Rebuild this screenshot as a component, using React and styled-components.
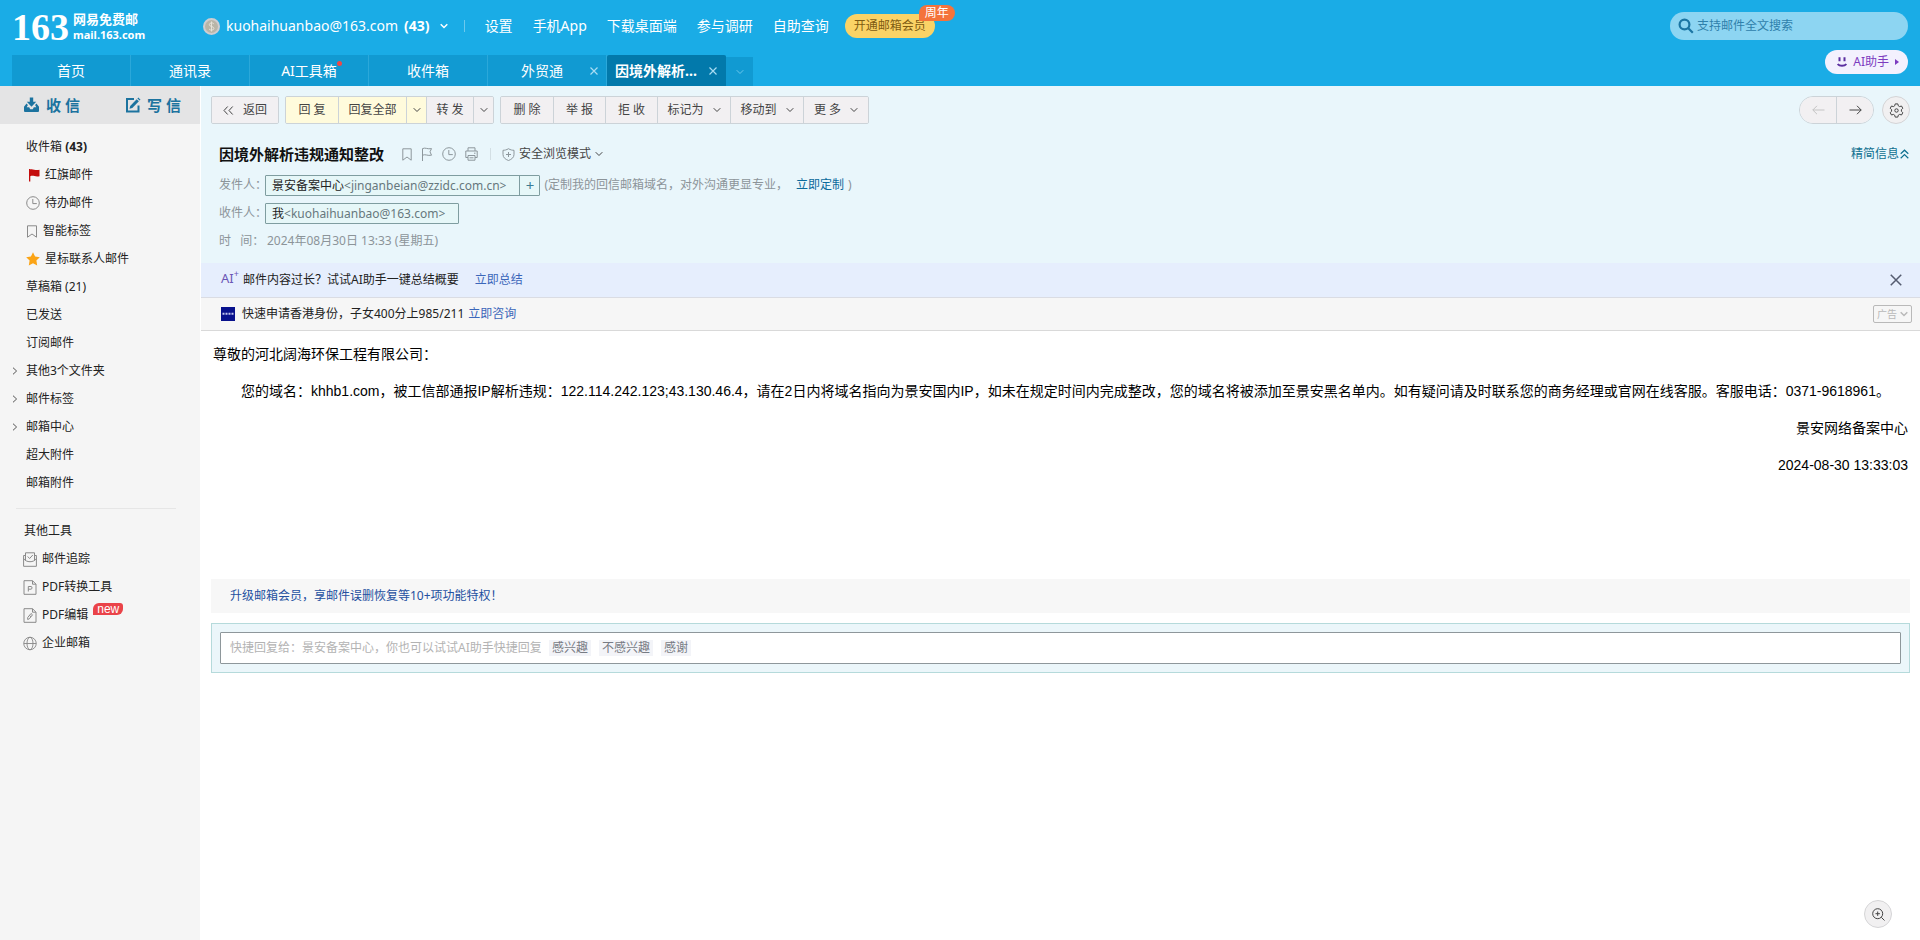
import React from 'react';
import styled, { createGlobalStyle, css } from 'styled-components';

const GlobalStyle = createGlobalStyle`
    * {
        box-sizing : border-box;
    }
    body {
        margin : 0;
        background : #fff;
        color : #222;
        font : 12px/20px "Noto Sans", "Noto Sans CJK SC", sans-serif;
    }
    button, input {
        font : inherit;
        color : inherit;
        margin : 0;
        padding : 0;
        border : 0;
        background : none;
    }
    button {
        cursor : pointer;
        white-space : nowrap;
    }
    a {
        color : inherit;
        text-decoration : none;
        white-space : nowrap;
    }
    svg {
        display : block;
        flex : none;
    }
    h1, p, ul {
        margin : 0;
        padding : 0;
        list-style : none;
    }
`

/* ---------- icons ---------- */

const Icon = ({ w = 14, h = w, box = `0 0 ${w} ${h}`, sw = 1, children }) => (
    <svg width={w} height={h} viewBox={box} fill="none" stroke="currentColor" strokeWidth={sw} aria-hidden="true">
        {children}
    </svg>
);

const ChevronDown = ({ sw = 1 }) => <Icon w={8} h={6} sw={sw}><path d="M.7 1.2 4 4.5l3.3-3.3" /></Icon>;
const ChevronRight = () => <Icon w={6} h={8}><path d="M1 .7 4.6 4 1 7.3" /></Icon>;
const Cross = ({ size = 8, sw = 1.2 }) => <Icon w={size} box="0 0 8 8" sw={sw}><path d="m.5.5 7 7m0-7-7 7" /></Icon>;
const Clock = ({ size = 14 }) => <Icon w={size} box="0 0 14 14"><circle cx="7" cy="7" r="6.3" /><path d="M6.8 3v4.6h4" /></Icon>;
const Bookmark = () => <Icon w={10} h={13}><path d="M.8.8h8.4v11.4L5 9 .8 12.200z" /></Icon>;
const Flag = () => <Icon w={12} h={14}><path d="M1.500 14V1.600c3-1.400 5 .9 9 0L9 4.800l1.500 3.400c-4 .9-6-1.400-9 0" /></Icon>;
const Printer = () => (
    <Icon w={13} h={14}>
        <path d="M3 4V.8h7V4M3 10.500H.8V4h11.400v6.500H10M3 8.500h7v4.700H3zM4.500 10.800h4M9 6.200h1.500" />
    </Icon>
);
const Shield = () => <Icon w={13} h={13}><path d="M6.500.7C8.500 2 10.500 2.300 12 2.300v4.200c0 3-2.300 4.800-5.500 6C3.300 11.300 1 9.500 1 6.500V2.300c1.500 0 3.500-.3 5.500-1.600zM6.500 4v5M4 6.500h5" /></Icon>;
const RedFlag = () => (
    <svg width="14" height="14" viewBox="0 0 14 14" fill="#c40d0d" aria-hidden="true">
        <path d="M3 1h1.300v12.500H3zM4.300 1.500C7 .4 9 3 13.500 1.800v6.400C9.500 9.500 7.500 7 4.300 8.200z" />
    </svg>
);
const Star = () => (
    <svg width="14" height="14" viewBox="0 0 14 14" fill="#fba416" aria-hidden="true">
        <path d="m7 .3 2.100 4.300 4.700.7-3.400 3.300.8 4.800L7 11.200l-4.200 2.200.8-4.800L.2 5.300l4.700-.7z" />
    </svg>
);
const Inbox = () => (
    <svg width="17" height="16" viewBox="0 0 17 16" fill="currentColor" aria-hidden="true">
        <path d="M6.800.5h3.400v4.300h3L8.500 9.800l-4.700-5h3z" />
        <path d="M3.500 6.500 1 9.800v4.200q0 1 1 1h13q1 0 1-1V9.800l-2.500-3.300-1.400 1.400 1.200 2.300h-2.500l-1 2H7.200l-1-2H3.700l1.200-2.300z" />
    </svg>
);
const Compose = () => (
    <Icon w={16} h={16} sw={2}>
        <path d="M9 2H2v12.500h11.500V8.500" />
        <path d="M4.500 11.800 5.200 9l6.500-6.800 2.200 2.100-6.600 6.800z" fill="currentColor" stroke="none" />
        <path d="m12.400 1.500.9-.9 2.200 2.100-.9.900z" fill="currentColor" stroke="none" />
    </Icon>
);
const TrackMail = () => (
    <Icon w={14} h={15}>
        <path d="M2.500 8V.8h9V8M2.500 3.500H.6v10.800h12.800V3.500h-1.900M.6 6.500C3 10.800 11 10.800 13.400 6.500M4.700 4.500l1.900 2 3.200-3.500" />
    </Icon>
);
const PdfFile = () => <Icon w={14} h={15}><path d="M1 .7h8.500L13 4.200v10.100H1zM9.500.7v3.500H13M5.300 11.500v-5H8q1 0 1 1.300T8 9.200H5.300" /></Icon>;
const PdfEdit = () => <Icon w={14} h={15}><path d="M1 .7h8.500L13 4.200v10.100H1zM9.500.7v3.500H13M4.700 11.500v-2l3.300-4 1.500 1.300-3.200 4zM6.500 7.500 8 8.800" /></Icon>;
const Globe = () => <Icon w={15}><circle cx="7.500" cy="7.500" r="6.700" /><ellipse cx="7.500" cy="7.500" rx="3.200" ry="6.700" /><path d="M.8 7.500h13.400" /></Icon>;
const Magnifier = () => <Icon w={16} sw={2.200}><circle cx="6.500" cy="6.500" r="4.900" /><path d="m10 10 4.800 4.800" /></Icon>;
const ZoomPlus = () => <Icon w={13}><circle cx="5.700" cy="5.700" r="5" /><path d="m9.300 9.300 3.200 3.200M5.700 3.500v4.400M3.500 5.700h4.400" /></Icon>;
const Gear = () => (
    <Icon w={15}>
        <path d="M6.200.9h2.600l.5 1.900 1.300.8 1.900-.6 1.300 2.300-1.400 1.300v1.700l1.400 1.400-1.300 2.300-1.900-.6-1.300.8-.5 1.900H6.200l-.5-1.900-1.300-.8-1.900.6-1.300-2.300 1.400-1.400V6.600L1.200 5.300 2.500 3l1.900.6 1.300-.8z" />
        <circle cx="7.500" cy="7.500" r="1.700" />
    </Icon>
);
const ArrowLeft = () => <Icon w={13} h={10}><path d="M12.500 5H.8M5 .8.800 5 5 9.200" /></Icon>;
const ArrowRight = () => <Icon w={13} h={10}><path d="M.5 5h11.700M8 .8 12.200 5 8 9.200" /></Icon>;
const DoubleLeft = () => <Icon w={11} h={9}><path d="M4.700.5 1 4.500l3.700 4M9.700.5 6 4.500l3.700 4" /></Icon>;
const DoubleUp = () => <Icon w={9} h={10} sw={1.200}><path d="m.7 4.800 3.800-3.600 3.800 3.600M.7 9.200l3.800-3.600 3.800 3.600" /></Icon>;
const Smile = () => (
    <Icon w={10} sw={2}>
        <path d="M2.500.3v4M7.500.3v4M.6 7c1.800 2.400 7 2.400 8.800 0" />
    </Icon>
);
const Avatar = () => (
    <svg width="17" height="17" viewBox="0 0 17 17" fill="none" aria-hidden="true">
        <circle cx="8.500" cy="8.500" r="7.500" fill="#b9b5a7" stroke="#cfcdd0" strokeWidth="2" />
        <path d="M10.800 5.800C9.500 4.300 6.300 4.700 6.300 6.700c0 2.200 4.600 1.400 4.600 3.700 0 2-3.400 2.300-4.800.7M8.500 3.500v10" stroke="#e6e2d8" />
    </svg>
);
const Sponsor = () => (
    <svg width="14" height="14" viewBox="0 0 14 14" aria-hidden="true">
        <path fill="#08118c" d="M0 0h14v14H0z" />
        <path stroke="#c3c7ee" strokeWidth="2" strokeDasharray="2 1" d="M1.500 6.800h11" />
    </svg>
);

/* ---------- header ---------- */

const Header = styled.header`
    height : 86px;
    padding-left : 12px;
    padding-right : 12px;
    display : flex;
    justify-content : space-between;
    background : #1aace6;
    color : #fff;
    font-size : 14px;
`

const HeaderLeft = styled.div`
    display : flex;
    flex-direction : column;
    justify-content : space-between;
`

const TopLine = styled.div`
    display : flex;
    align-items : center;
    height : 52px;
`

const Logo = styled.a`
    display : flex;
    align-items : center;
    width : 191px;
    padding-top : 2px;
    gap : 4px;
    font-weight : 700;
`

const LogoNumber = styled.span`
    font : 700 38px/52px "Liberation Serif", serif;
`

const LogoWords = styled.span`
    display : flex;
    flex-direction : column;
    font-size : 13px;
    line-height : 15px;
    small {
        font-size : 11px;
    }
`

const Account = styled.button`
    display : flex;
    align-items : center;
    gap : 6px;
    strong {
        margin-right : 4px;
    }
`

const TopLinks = styled.nav`
    display : flex;
    align-items : center;
    gap : 20px;
    margin-left : 16px;
`

const Divider = styled.span`
    width : 1px;
    height : 12px;
    background : ${props => props.$tone};
`

const VipWrap = styled.span`
    position : relative;
    margin-left : 16px;
`

const VipButton = styled.button`
    display : block;
    height : 24px;
    padding : 0 9px;
    border-radius : 12px;
    background : #fad366;
    color : #7e5b12;
    font-size : 12px;
`

const VipBadge = styled.span`
    position : absolute;
    top : -9px;
    left : 74px;
    padding : 0 6px;
    border-radius : 8px 8px 8px 0;
    background : #f4733b;
    font-size : 12px;
    line-height : 16px;
    white-space : nowrap;
`

const Tabs = styled.nav`
    display : flex;
    align-items : flex-end;
`

const Tab = styled.div`
    position : relative;
    display : flex;
    align-items : center;
    width : 119px;
    height : 31px;
    background : ${props => props.$active ? '#0279ab' : '#119ad2'};
    border-right : 1px solid ${props => props.$active ? '#0279ab' : '#2ba8da'};
    border-radius : ${props => props.$active ? '2px 2px 0 0' : '0'};
    font-weight : ${props => props.$active ? 700 : 400};
    > a {
        flex : 1;
        text-align : center;
    }
    > button {
        padding : 4px;
        margin-right : 4px;
        margin-left : ${props => props.$active ? '0' : '-10px'};
        color : #a9dcf2;
    }
`

const TabDot = styled.i`
    position : absolute;
    top : 6px;
    right : 26px;
    width : 5px;
    height : 5px;
    border-radius : 3px;
    background : #ee4848;
`

const TabMore = styled.button`
    display : flex;
    align-items : center;
    justify-content : center;
    width : 27px;
    height : 29px;
    background : #119ad2;
    color : #6cc7eb;
`

const HeaderRight = styled.div`
    display : flex;
    flex-direction : column;
    align-items : flex-end;
    gap : 10px;
    padding-top : 12px;
    font-size : 12px;
`

const SearchBox = styled.label`
    display : flex;
    align-items : center;
    gap : 3px;
    width : 238px;
    height : 28px;
    padding : 0 8px;
    border-radius : 14px;
    background : #8dd5f2;
    color : #1b75a3;
    input {
        flex : 1;
        min-width : 0;
        outline : none;
    }
    input::placeholder {
        color : #2f80ab;
        opacity : 1;
    }
`

const AiButton = styled.button`
    display : flex;
    align-items : center;
    gap : 6px;
    height : 24px;
    padding : 0 9px 0 12px;
    border-radius : 12px;
    background : #f3f1fe;
    color : #7c3bc0;
    svg:first-child {
        color : #5b2fa0;
    }
`

/* ---------- sidebar ---------- */

const Page = styled.div`
    display : flex;
    flex-direction : column;
    min-height : 100vh;
`

const Columns = styled.div`
    display : flex;
    flex : 1;
`

const Sidebar = styled.aside`
    flex : none;
    width : 200px;
    background : #f5f5f5;
`

const MailActions = styled.div`
    display : flex;
    justify-content : space-between;
    height : 38px;
    padding : 0 19px 0 23px;
    background : #e4e4e5;
    color : #1c739f;
    font-size : 15px;
    font-weight : 700;
    button {
        display : flex;
        align-items : center;
        gap : 6px;
    }
`

const FolderList = styled.ul`
    padding-top : 9px;
`

const Folder = styled.li`
    display : flex;
    align-items : center;
    height : 28px;
    padding-left : ${props => props.$foldable ? '11px' : '26px'};
    color : #222;
    a {
        display : flex;
        align-items : center;
        gap : 5px;
        white-space : pre;
    }
    button {
        width : 15px;
        height : 20px;
        color : #555;
    }
    button svg {
        margin-left : 1px;
    }
    a svg {
        color : #8a8a8a;
    }
`

const ToolList = styled.section`
    margin : 11px 24px 0 16px;
    padding : 8px 0 0 7px;
    border-top : 1px solid #e6e6e6;
`

const ToolTitle = styled.p`
    padding-left : 1px;
    line-height : 28px;
`

const Tool = styled.a`
    display : flex;
    align-items : center;
    gap : 5px;
    height : 28px;
    svg {
        width : 14px;
        color : #8a8a8a;
    }
`

const NewTag = styled.sup`
    align-self : flex-start;
    padding : 0 4px;
    margin-top : 2px;
    border-radius : 6px 3px 6px 0;
    background : #ea4349;
    color : #fff;
    font : 12px/12px "Liberation Sans", sans-serif;
`

/* ---------- mail ---------- */

const Main = styled.main`
    flex : 1;
    min-width : 0;
    margin-left : 1px;
    display : flex;
    flex-direction : column;
`

const MailHead = styled.section`
    height : 177px;
    padding : 10px 10px 0;
    background : #e9f6fb;
`

const Toolbar = styled.div`
    display : flex;
    gap : 6px;
`

const Spacer = styled.span`
    flex : 1;
`

const ButtonGroup = styled.div`
    display : flex;
    overflow : hidden;
    border : 1px solid #ccd3d8;
    border-radius : ${props => props.$round ? '14px' : '2px'};
    height : 28px;
`

const ToolButton = styled.button`
    display : flex;
    align-items : center;
    justify-content : center;
    gap : 9px;
    min-width : ${props => props.$w || 52}px;
    background : ${props => props.$primary ? '#fffbdc' : '#f2f0f2'};
    color : ${props => props.disabled ? '#c4c4c4' : '#444'};
    & + & {
        border-left : 1px solid #ccd3d8;
    }
`

const roundButton = css`
    display : flex;
    align-items : center;
    justify-content : center;
    width : 28px;
    height : 28px;
    border : 1px solid #d4d4d6;
    border-radius : 14px;
    background : #f1f0f1;
    color : #444;
`

const GearButton = styled.button`
    ${roundButton}
    margin-left : 2px;
`

const SubjectRow = styled.div`
    display : flex;
    align-items : center;
    margin : 18px 0 5px;
    padding-left : 8px;
    height : 24px;
    h1 {
        margin-right : 18px;
        font-size : 15px;
        line-height : 24px;
        color : #111;
    }
`

const SubjectIcons = styled.div`
    display : flex;
    align-items : center;
    gap : 9px;
    margin-right : 12px;
    color : #8d979c;
    button {
        display : block;
    }
`

const SafeMode = styled.button`
    display : flex;
    align-items : center;
    gap : 4px;
    margin-left : 11px;
    color : #444;
    svg:first-child {
        color : #8d979c;
    }
`

const Compact = styled.a`
    display : flex;
    align-items : center;
    gap : 1px;
    padding-right : 1px;
    color : #0f7090;
`

const InfoRow = styled.div`
    display : flex;
    align-items : center;
    height : 28px;
    padding-left : 8px;
    color : #8c9499;
    white-space : nowrap;
`

const InfoLabel = styled.span`
    width : 46px;
`

const SentAt = styled.time`
    padding-left : 2px;
`

const Contact = styled.span`
    display : flex;
    height : 21px;
    margin-right : 4px;
    border : 1px solid #7f9da0;
    border-radius : 1px;
    background : #e6f7f8;
    color : #66787d;
    line-height : 19px;
    > span {
        padding : 0 13px 0 6px;
    }
    b {
        color : #222;
        font-weight : 400;
    }
    button {
        width : 20px;
        border-left : 1px solid #7f9da0;
        color : #3c7d95;
        font-size : 15px;
        line-height : 18px;
    }
`

const CustomLink = styled.a`
    margin : 0 4px 0 8px;
    color : #0a6a9c;
`

const AiBar = styled.div`
    display : flex;
    align-items : center;
    height : 35px;
    padding : 0 17px 0 20px;
    border-bottom : 1px solid #dadce3;
    background : #e6eefd;
    button {
        padding : 1px;
        color : #555c70;
    }
`

const AiMark = styled.span`
    align-self : flex-start;
    width : 22px;
    padding-top : 5px;
    color : #6a55b5;
    font-size : 13px;
    sup {
        font-size : 9px;
        line-height : 0;
        vertical-align : 6px;
    }
`

const BarLink = styled.a`
    margin-left : ${props => props.$gap}px;
    color : #3c67ba;
`

const AdBar = styled.div`
    display : flex;
    align-items : center;
    height : 33px;
    padding : 0 8px 0 20px;
    border-bottom : 1px solid #d9d9d9;
    background : #f6f6f6;
    > svg {
        margin-right : 7px;
    }
`

const AdButton = styled.button`
    display : flex;
    align-items : center;
    gap : 3px;
    height : 18px;
    padding : 0 3px;
    border : 1px solid #b9b9b9;
    border-radius : 2px;
    color : #b9b9b9;
    font-size : 10px;
`

const MailBody = styled.article`
    min-height : 248px;
    padding : 12px 12px 0;
    color : #000;
    font : 14px/23px "Liberation Sans", "Noto Sans CJK SC", sans-serif;
    p {
        margin-bottom : 14px;
    }
`

const Indented = styled.p`
    text-indent : 2em;
`

const Signed = styled.p`
    text-align : right;
`

const UpgradeBar = styled.div`
    margin : 0 10px 10px;
    padding : 7px 19px;
    background : #f7f7f7;
    color : #2450a0;
`

const ReplyBox = styled.div`
    margin : 0 10px;
    padding : 8px;
    border : 1px solid #b5dadb;
    background : #ebf6fa;
`

const ReplyField = styled.div`
    display : flex;
    align-items : center;
    gap : 8px;
    height : 32px;
    padding : 0 9px;
    border : 1px solid #8e979b;
    border-radius : 1px;
    background : #fff;
    input {
        width : 311px;
        outline : none;
    }
    input::placeholder {
        color : #b3b3b3;
        opacity : 1;
    }
    button {
        padding : 0 3px;
        line-height : 16px;
        background : #f3f4f8;
        color : #777b84;
    }
`

const ZoomButton = styled.button`
    ${roundButton}
    position : fixed;
    right : 28px;
    bottom : 12px;
`

const folders = [
    { name: '收件箱 ', count: '(43)', bold: true },
    { name: '红旗邮件', icon: <RedFlag /> },
    { name: '待办邮件', icon: <Clock /> },
    { name: '智能标签', icon: <Icon w={12} h={13}><path d="M1.500.8h9v11.400L6 9l-4.500 3.200z" /></Icon> },
    { name: '星标联系人邮件', icon: <Star /> },
    { name: '草稿箱 (21)' },
    { name: '已发送' },
    { name: '订阅邮件' },
    { name: '其他3个文件夹', foldable: true },
    { name: '邮件标签', foldable: true },
    { name: '邮箱中心', foldable: true },
    { name: '超大附件' },
    { name: '邮箱附件' },
];

const tabs = [
    { name: '首页' },
    { name: '通讯录' },
    { name: 'AI工具箱', dot: true },
    { name: '收件箱' },
    { name: '外贸通', close: true },
    { name: '因境外解析...', close: true, active: true },
];

const TopBar = () => (
    <Header>
        <HeaderLeft>
            <TopLine>
                <Logo href="#">
                    <LogoNumber>163</LogoNumber>
                    <LogoWords>网易免费邮<small>mail.163.com</small></LogoWords>
                </Logo>
                <Account>
                    <Avatar />
                    <span>kuohaihuanbao@163.com</span>
                    <strong>(43)</strong>
                    <ChevronDown sw={1.500} />
                </Account>
                <TopLinks>
                    <Divider $tone="#6cc9ee" />
                    <a href="#">设置</a>
                    <a href="#">手机App</a>
                    <a href="#">下载桌面端</a>
                    <a href="#">参与调研</a>
                    <a href="#">自助查询</a>
                </TopLinks>
                <VipWrap>
                    <VipButton>开通邮箱会员</VipButton>
                    <VipBadge>周年</VipBadge>
                </VipWrap>
            </TopLine>
            <Tabs>
                {tabs.map(tab => (
                    <Tab key={tab.name} $active={tab.active}>
                        <a href="#">{tab.name}</a>
                        {tab.dot && <TabDot />}
                        {tab.close && <button aria-label="关闭"><Cross /></button>}
                    </Tab>
                ))}
                <TabMore aria-label="更多标签"><ChevronDown /></TabMore>
            </Tabs>
        </HeaderLeft>
        <HeaderRight>
            <SearchBox>
                <Magnifier />
                <input type="text" aria-label="搜索" placeholder="支持邮件全文搜索" />
            </SearchBox>
            <AiButton>
                <Smile />
                AI助手
                <svg width="4" height="6" viewBox="0 0 4 6" fill="currentColor" aria-hidden="true"><path d="M0 0l4 3-4 3z" /></svg>
            </AiButton>
        </HeaderRight>
    </Header>
);

const SideNav = () => (
    <Sidebar>
        <MailActions>
            <button><Inbox />收 信</button>
            <button><Compose />写 信</button>
        </MailActions>
        <FolderList>
            {folders.map(folder => (
                <Folder key={folder.name} $foldable={folder.foldable}>
                    {folder.foldable && <button aria-label="展开"><ChevronRight /></button>}
                    <a href="#">
                        {folder.icon}
                        <span>{folder.name}{folder.bold && <b>{folder.count}</b>}</span>
                    </a>
                </Folder>
            ))}
        </FolderList>
        <ToolList>
            <ToolTitle>其他工具</ToolTitle>
            <Tool href="#"><TrackMail />邮件追踪</Tool>
            <Tool href="#"><PdfFile />PDF转换工具</Tool>
            <Tool href="#"><PdfEdit />PDF编辑<NewTag>new</NewTag></Tool>
            <Tool href="#"><Globe />企业邮箱</Tool>
        </ToolList>
    </Sidebar>
);

const MailToolbar = () => (
    <Toolbar>
        <ButtonGroup>
            <ToolButton $w={66}><DoubleLeft />返回</ToolButton>
        </ButtonGroup>
        <ButtonGroup>
            <ToolButton $primary>回 复</ToolButton>
            <ToolButton $primary $w={68}>回复全部</ToolButton>
            <ToolButton $primary $w={20} aria-label="更多回复"><ChevronDown /></ToolButton>
            <ToolButton $w={47}>转 发</ToolButton>
            <ToolButton $w={20} aria-label="更多转发"><ChevronDown /></ToolButton>
        </ButtonGroup>
        <ButtonGroup>
            <ToolButton>删 除</ToolButton>
            <ToolButton>举 报</ToolButton>
            <ToolButton>拒 收</ToolButton>
            <ToolButton $w={73}>标记为<ChevronDown /></ToolButton>
            <ToolButton $w={73}>移动到<ChevronDown /></ToolButton>
            <ToolButton $w={65}>更 多<ChevronDown /></ToolButton>
        </ButtonGroup>
        <Spacer />
        <ButtonGroup $round>
            <ToolButton $w={36} disabled aria-label="上一封"><ArrowLeft /></ToolButton>
            <ToolButton $w={37} aria-label="下一封"><ArrowRight /></ToolButton>
        </ButtonGroup>
        <GearButton aria-label="设置"><Gear /></GearButton>
    </Toolbar>
);

export default function App() {
    return (
        <Page>
            <GlobalStyle />
            <TopBar />
            <Columns>
                <SideNav />
                <Main>
                    <MailHead>
                        <MailToolbar />
                        <SubjectRow>
                            <h1>因境外解析违规通知整改</h1>
                            <SubjectIcons>
                                <button aria-label="标签"><Bookmark /></button>
                                <button aria-label="红旗"><Flag /></button>
                                <button aria-label="待办"><Clock /></button>
                                <button aria-label="打印"><Printer /></button>
                            </SubjectIcons>
                            <Divider $tone="#d3dfe4" />
                            <SafeMode><Shield />安全浏览模式<ChevronDown /></SafeMode>
                            <Spacer />
                            <Compact href="#">精简信息<DoubleUp /></Compact>
                        </SubjectRow>
                        <InfoRow>
                            <InfoLabel>发件人：</InfoLabel>
                            <Contact>
                                <span><b>景安备案中心</b>&lt;jinganbeian@zzidc.com.cn&gt;</span>
                                <button aria-label="添加联系人">+</button>
                            </Contact>
                            (定制我的回信邮箱域名，对外沟通更显专业，
                            <CustomLink href="#">立即定制</CustomLink>)
                        </InfoRow>
                        <InfoRow>
                            <InfoLabel>收件人：</InfoLabel>
                            <Contact><span><b>我</b>&lt;kuohaihuanbao@163.com&gt;</span></Contact>
                        </InfoRow>
                        <InfoRow>
                            <InfoLabel>时&nbsp;&nbsp;&nbsp;间：</InfoLabel>
                            <SentAt>2024年08月30日 13:33 (星期五)</SentAt>
                        </InfoRow>
                    </MailHead>
                    <AiBar>
                        <AiMark>AI<sup>+</sup></AiMark>
                        邮件内容过长？试试AI助手一键总结概要
                        <BarLink href="#" $gap={16}>立即总结</BarLink>
                        <Spacer />
                        <button aria-label="关闭"><Cross size={12} sw={1} /></button>
                    </AiBar>
                    <AdBar>
                        <Sponsor />
                        快速申请香港身份，子女400分上985/211
                        <BarLink href="#" $gap={4}>立即咨询</BarLink>
                        <Spacer />
                        <AdButton>广告<ChevronDown sw={1.500} /></AdButton>
                    </AdBar>
                    <MailBody>
                        <p>尊敬的河北阔海环保工程有限公司：</p>
                        <Indented>您的域名：khhb1.com，被工信部通报IP解析违规：122.114.242.123;43.130.46.4，请在2日内将域名指向为景安国内IP，如未在规定时间内完成整改，您的域名将被添加至景安黑名单内。如有疑问请及时联系您的商务经理或官网在线客服。客服电话：0371-9618961。</Indented>
                        <Signed>景安网络备案中心</Signed>
                        <Signed>2024-08-30 13:33:03</Signed>
                    </MailBody>
                    <UpgradeBar><a href="#">升级邮箱会员，享邮件误删恢复等10+项功能特权！</a></UpgradeBar>
                    <ReplyBox>
                        <ReplyField>
                            <input type="text" aria-label="快捷回复" placeholder="快捷回复给：景安备案中心，你也可以试试AI助手快捷回复" />
                            <button>感兴趣</button>
                            <button>不感兴趣</button>
                            <button>感谢</button>
                        </ReplyField>
                    </ReplyBox>
                </Main>
            </Columns>
            <ZoomButton aria-label="放大"><ZoomPlus /></ZoomButton>
        </Page>
    )
}
